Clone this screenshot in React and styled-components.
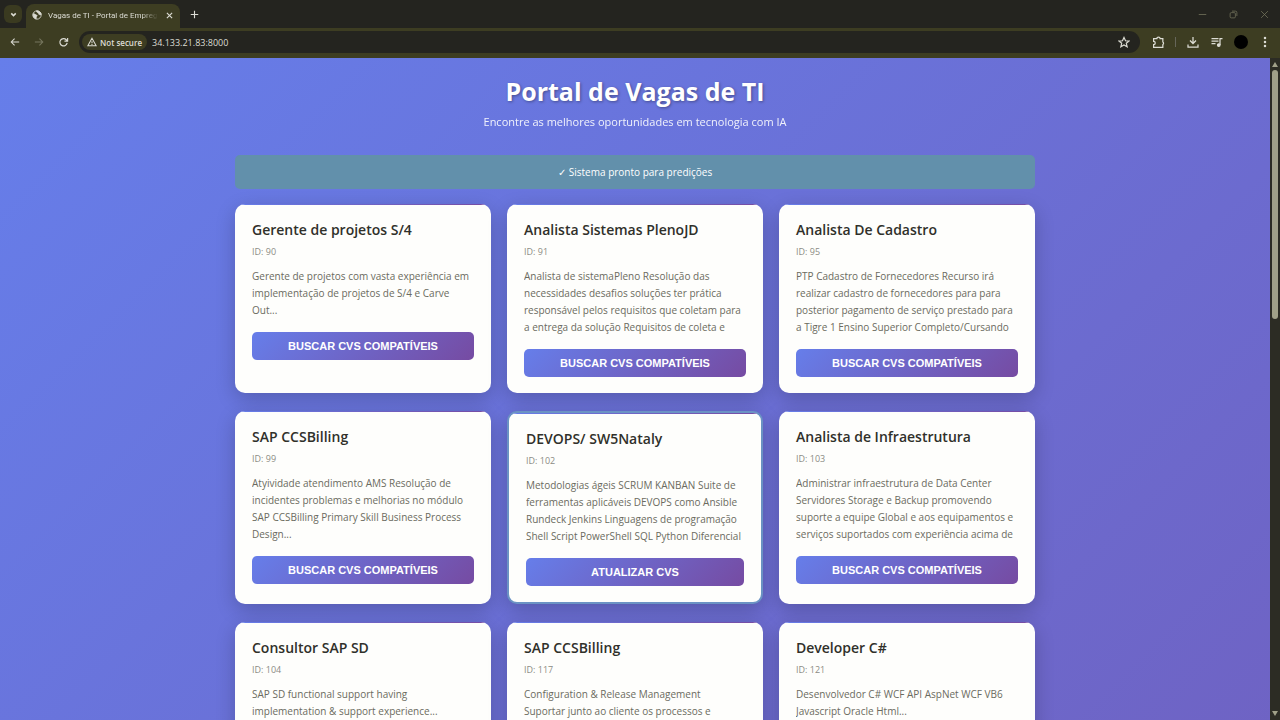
import React from 'react';
import styled, { createGlobalStyle } from 'styled-components';

const Global = createGlobalStyle`
  *, *::before, *::after { box-sizing: border-box; margin: 0; padding: 0; }
  html, body, #root { height: 100%; }
  body { font-family: "Segoe UI", "Open Sans", "Noto Sans", sans-serif; overflow: hidden; }
  button, input { font: inherit; border: 0; background: none; color: inherit; }
`;

const Browser = styled.div`
  height: 100vh;
  display: flex;
  flex-direction: column;
`;

const TabStrip = styled.div`
  flex: none;
  height: 28px;
  display: flex;
  align-items: center;
  background: #24241f;
  color: #dcdcd4;
`;

const TabSearch = styled.button`
  width: 18px;
  height: 18px;
  margin: 0 4px;
  display: grid;
  place-items: center;
  border-radius: 6px;
  background: #3a3a20;
`;

const Tab = styled.div`
  align-self: flex-end;
  width: 154px;
  height: 24px;
  padding: 0 6px 2px 6px;
  display: flex;
  align-items: center;
  gap: 6px;
  border-radius: 8px 8px 0 0;
  background: #3d3d22;
  font-family: Roboto, sans-serif;
  font-size: 8px;
`;

const TabTitle = styled.span`
  flex: 1;
  overflow: hidden;
  white-space: nowrap;
  mask-image: linear-gradient(90deg, #000 85%, transparent);
`;

const IconButton = styled.button`
  flex: none;
  width: ${(p) => p.$size || 16}px;
  height: 16px;
  display: grid;
  place-items: center;
  color: ${(p) => (p.$dim ? '#77775f' : '#dcdcd4')};
`;

const WindowControls = styled.div`
  margin-left: auto;
  display: flex;
  gap: 15px;
  padding-right: 8px;
`;

const Toolbar = styled.div`
  flex: none;
  height: 30px;
  padding: 0 7px 2px;
  display: flex;
  align-items: center;
  gap: 8px;
  background: #3d3d22;
`;

const AddressBar = styled.div`
  flex: 1;
  height: 22px;
  margin-right: 2px;
  padding: 0 8px 0 3px;
  display: flex;
  align-items: center;
  border-radius: 11px;
  background: #24241f;
  color: #dcdcd4;
`;

const Security = styled.button`
  height: 16px;
  padding: 0 5px;
  display: flex;
  align-items: center;
  gap: 3px;
  border-radius: 8px;
  background: #3d3d22;
  font-size: 8px;
  font-weight: 600;
  white-space: nowrap;
`;

const Address = styled.input`
  flex: 1;
  min-width: 0;
  padding-left: 5px;
  font-size: 9px;
  outline: 0;
`;

const Divider = styled.span`
  width: 1px;
  height: 10px;
  margin: 0 1px;
  background: #66665a;
`;

const Avatar = styled.button`
  width: 14px;
  height: 14px;
  margin: 0 1px;
  border-radius: 50%;
  background: #000;
`;

const Viewport = styled.div`
  flex: 1;
  min-height: 0;
  display: flex;
  overflow: hidden;
`;

const Page = styled.div`
  flex: 1;
  min-width: 0;
  overflow: hidden;
  background: linear-gradient(135deg, #667eea 0%, #764ba2 100%) 0 0 / 100% 2400px;
`;

const Container = styled.main`
  max-width: 832px;
  margin: 0 auto;
  padding: 13px 16px;
`;

const Header = styled.header`
  margin-bottom: 25px;
  text-align: center;
  color: #fff;
`;

const Heading = styled.h1`
  font-size: 25px;
  line-height: 40px;
  font-weight: 700;
  text-shadow: 1px 1px 3px rgba(0, 0, 0, 0.35);
`;

const Subtitle = styled.p`
  padding-top: 3px;
  font-size: 11px;
  line-height: 16px;
  opacity: 0.9;
`;

const Status = styled.div`
  height: 34px;
  margin-bottom: 15px;
  display: flex;
  align-items: center;
  justify-content: center;
  gap: 3px;
  border-radius: 5px;
  background: #6290ab;
  color: #fff;
  font-size: 10px;
`;

const Grid = styled.div`
  display: grid;
  grid-template-columns: repeat(3, minmax(0, 1fr));
  gap: 18px 16px;
`;

const Card = styled.article`
  position: relative;
  overflow: hidden;
  padding: 16px 17px;
  border: ${(p) => (p.$active ? '2px solid #6b93c4' : '0')};
  border-radius: 10px;
  background: #fefefc;
  box-shadow: 0 6px 20px rgba(0, 0, 0, 0.2);
  &::before {
    content: "";
    position: absolute;
    inset: 0 0 auto;
    height: 1px;
    background: linear-gradient(90deg, #667eea, #764ba2);
  }
`;

const JobTitle = styled.h2`
  font-size: 14px;
  line-height: 20px;
  font-weight: 600;
  color: #30302a;
`;

const JobId = styled.p`
  margin: 4px 0 8px;
  font-size: 9px;
  line-height: 16px;
  color: #8c8c84;
`;

const Description = styled.p`
  max-height: 68px;
  margin-bottom: 13px;
  overflow: hidden;
  font-size: 10px;
  line-height: 17px;
  white-space: nowrap;
  color: #6b6b60;
`;

const Action = styled.button`
  display: block;
  width: 100%;
  height: 28px;
  border-radius: 5px;
  background: linear-gradient(135deg, #667eea, #764ba2);
  color: #fff;
  font-family: "Liberation Sans", Arial, sans-serif;
  font-size: 11px;
  font-weight: 700;
`;

const ScrollTrack = styled.div`
  flex: none;
  width: 10px;
  padding: 4px 2px;
  display: flex;
  flex-direction: column;
  align-items: center;
  gap: 3px;
  background: #2c2c24;
`;

const ScrollThumb = styled.div`
  width: 6px;
  height: 38%;
  margin-bottom: auto;
  border-radius: 3px;
  background: #a0a088;
`;

const Icon = ({ size = 12, stroke = 2, children }) => (
  <svg width={size} height={size} viewBox="0 0 24 24" fill="none" stroke="currentColor" strokeWidth={stroke} aria-hidden="true">
    {children}
  </svg>
);

const jobs = [
  { title: 'Gerente de projetos S/4', id: 90, lines: ['Gerente de projetos com vasta experiência em', 'implementação de projetos de S/4 e Carve', 'Out...'] },
  { title: 'Analista Sistemas PlenoJD', id: 91, lines: ['Analista de sistemaPleno Resolução das', 'necessidades desafios soluções ter prática', 'responsável pelos requisitos que coletam para', 'a entrega da solução Requisitos de coleta e'] },
  { title: 'Analista De Cadastro', id: 95, lines: ['PTP Cadastro de Fornecedores Recurso irá', 'realizar cadastro de fornecedores para para', 'posterior pagamento de serviço prestado para', 'a Tigre 1 Ensino Superior Completo/Cursando'] },
  { title: 'SAP CCSBilling', id: 99, lines: ['Atyividade atendimento AMS Resolução de', 'incidentes problemas e melhorias no módulo', 'SAP CCSBilling Primary Skill Business Process', 'Design...'] },
  { title: 'DEVOPS/ SW5Nataly', id: 102, active: true, lines: ['Metodologias ágeis SCRUM KANBAN Suite de', 'ferramentas aplicáveis DEVOPS como Ansible', 'Rundeck Jenkins Linguagens de programação', 'Shell Script PowerShell SQL Python Diferencial'] },
  { title: 'Analista de Infraestrutura', id: 103, lines: ['Administrar infraestrutura de Data Center', 'Servidores Storage e Backup promovendo', 'suporte a equipe Global e aos equipamentos e', 'serviços suportados com experiência acima de'] },
  { title: 'Consultor SAP SD', id: 104, lines: ['SAP SD functional support having', 'implementation & support experience...'] },
  { title: 'SAP CCSBilling', id: 117, lines: ['Configuration & Release Management', 'Suportar junto ao cliente os processos e'] },
  { title: 'Developer C#', id: 121, lines: ['Desenvolvedor C# WCF API AspNet WCF VB6', 'Javascript Oracle Html...'] },
];

const JobCard = ({ job }) => (
  <Card $active={job.active}>
    <JobTitle>{job.title}</JobTitle>
    <JobId>ID: {job.id}</JobId>
    <Description>
      {job.lines.map((line) => (
        <React.Fragment key={line}>{line}<br /></React.Fragment>
      ))}
    </Description>
    <Action type="button">{job.active ? 'ATUALIZAR CVS' : 'BUSCAR CVS COMPATÍVEIS'}</Action>
  </Card>
);

export default function App() {
  return (
    <Browser>
      <Global />
      <TabStrip>
        <TabSearch aria-label="Search tabs"><Icon size={9} stroke={4}><path d="m6 9 6 6 6-6" /></Icon></TabSearch>
        <Tab>
          <Icon size={10} stroke={2}>
            <circle cx="12" cy="12" r="10" />
            <path fill="currentColor" d="M3 9c4 0 5 2 8 3 2 1 1 4-1 4v5C5 20 2 16 3 9ZM11 2c0 4 2 4 4 5s0 4 3 4h4C22 6 17 2 11 2Z" />
          </Icon>
          <TabTitle>Vagas de TI - Portal de Empregos</TabTitle>
          <IconButton $size={10} aria-label="Close tab"><Icon size={9} stroke={3}><path d="m5 5 14 14M19 5 5 19" /></Icon></IconButton>
        </Tab>
        <IconButton $size={28} aria-label="New tab"><Icon size={9} stroke={3}><path d="M12 2v20M2 12h20" /></Icon></IconButton>
        <WindowControls>
          <IconButton $dim aria-label="Minimize"><Icon size={9}><path d="M2 12h20" /></Icon></IconButton>
          <IconButton $dim aria-label="Restore"><Icon size={9}><rect x="3" y="7" width="14" height="14" rx="3" /><path d="M8 3h9a4 4 0 0 1 4 4v9" /></Icon></IconButton>
          <IconButton $dim aria-label="Close"><Icon size={9}><path d="m3 3 18 18M21 3 3 21" /></Icon></IconButton>
        </WindowControls>
      </TabStrip>
      <Toolbar>
        <IconButton aria-label="Back"><Icon size={10} stroke={2.5}><path d="M22 12H3m8-8-8 8 8 8" /></Icon></IconButton>
        <IconButton $dim aria-label="Forward"><Icon size={10} stroke={2.5}><path d="M2 12h19m-8-8 8 8-8 8" /></Icon></IconButton>
        <IconButton aria-label="Reload"><Icon size={11} stroke={2.5}><path d="M20 13a8 8 0 1 1-2-7l3 3M21 2v7h-7" /></Icon></IconButton>
        <AddressBar>
          <Security><Icon size={10} stroke={2.5}><path d="M12 3 2 21h20ZM12 10v5M12 17v2" /></Icon>Not secure</Security>
          <Address aria-label="Address" defaultValue="34.133.21.83:8000" />
          <IconButton aria-label="Bookmark"><Icon stroke={2.4}><path d="m12 3 3 6.500 7 .6-5.400 4.500 1.700 7L12 18l-6.300 3.600 1.700-7L2 10.100l7-.6Z" /></Icon></IconButton>
        </AddressBar>
        <IconButton aria-label="Extensions"><Icon size={13} stroke={2.3}><path d="M3 5h6a3 3 0 0 1 6 0h5v6a3 3 0 0 1 0 5v5H3v-5a3 3 0 0 0 0-6Z" /></Icon></IconButton>
        <Divider />
        <IconButton aria-label="Downloads"><Icon size={12} stroke={2.5}><path d="M12 2v13m-6-6 6 6 6-6M2 17v5h20v-5" /></Icon></IconButton>
        <IconButton aria-label="Media"><Icon size={12} stroke={2.5}><path d="M1 5h14M1 10h14M1 15h8M18 18V5h5" /><circle cx="15.5" cy="18" r="2.5" fill="currentColor" /></Icon></IconButton>
        <Avatar aria-label="Profile" />
        <IconButton aria-label="Menu"><Icon size={12} stroke={0}><g fill="currentColor"><circle cx="12" cy="4" r="2.5" /><circle cx="12" cy="12" r="2.5" /><circle cx="12" cy="20" r="2.5" /></g></Icon></IconButton>
      </Toolbar>
      <Viewport>
        <Page>
          <Container>
            <Header>
              <Heading>Portal de Vagas de TI</Heading>
              <Subtitle>Encontre as melhores oportunidades em tecnologia com IA</Subtitle>
            </Header>
            <Status role="status"><span>✓</span><span>Sistema pronto para predições</span></Status>
            <Grid>{jobs.map((job) => <JobCard key={job.id} job={job} />)}</Grid>
          </Container>
        </Page>
        <ScrollTrack>
          <svg width="6" height="5" viewBox="0 0 6 5" aria-hidden="true"><path d="M3 0 6 5H0Z" fill="#a0a088" /></svg>
          <ScrollThumb />
          <svg width="6" height="5" viewBox="0 0 6 5" aria-hidden="true"><path d="M0 0h6L3 5Z" fill="#a0a088" /></svg>
        </ScrollTrack>
      </Viewport>
    </Browser>
  );
}
